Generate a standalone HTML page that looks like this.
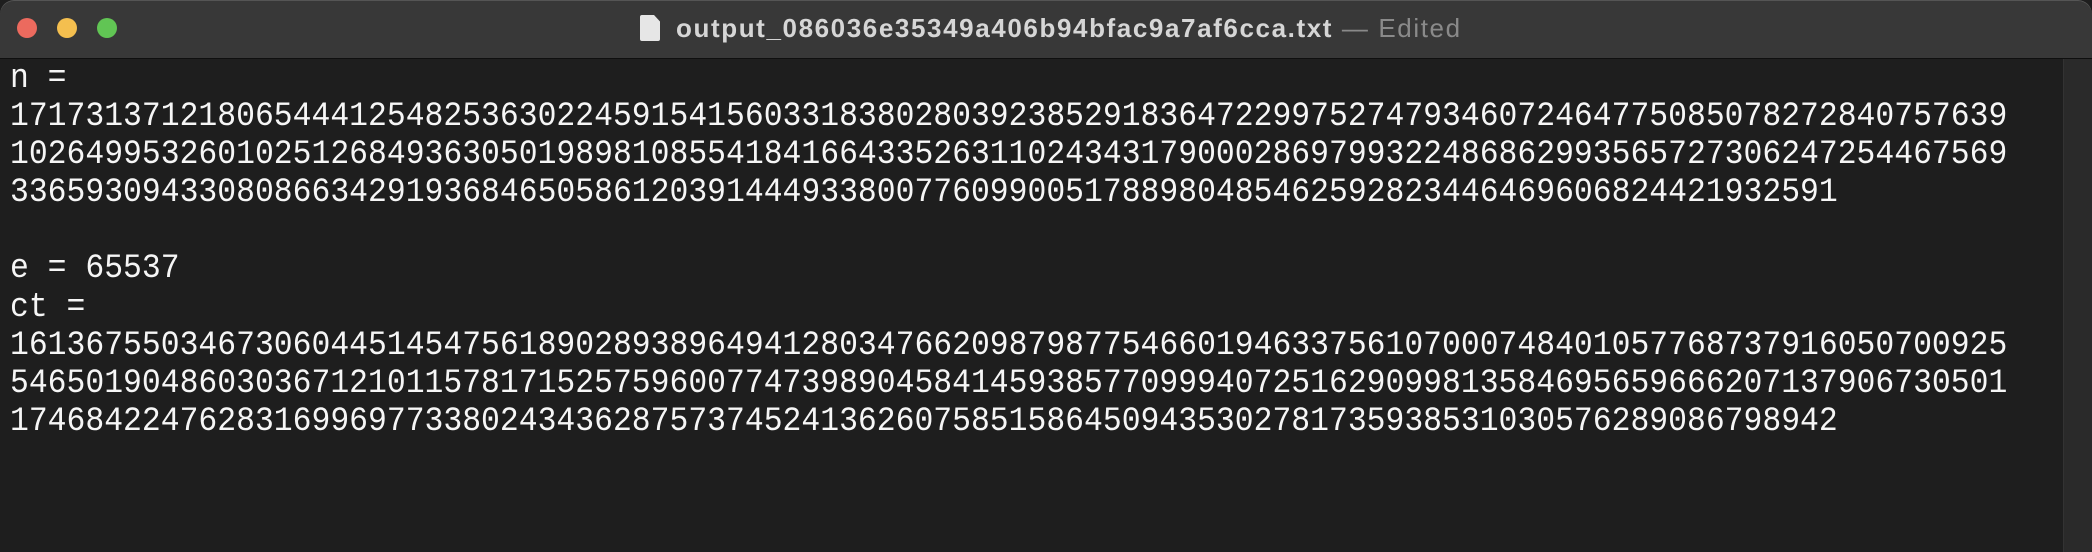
<!DOCTYPE html>
<html><head><meta charset="utf-8"><style>
html,body{margin:0;padding:0;width:2092px;height:552px;overflow:hidden;background:#1e1e1e}
.win{position:absolute;left:0;top:0;width:2092px;height:552px;background:#1e1e1e;border-radius:14px 14px 0 0;overflow:hidden}
.bar{position:absolute;left:0;top:0;width:2092px;height:58px;background:#383838;border-bottom:1px solid #0f0f0f;border-radius:14px 14px 0 0;box-shadow:inset 0 1px 0 #555}
.dot{position:absolute;top:18px;width:20px;height:20px;border-radius:50%}
.title{position:absolute;left:640px;top:13px;font:bold 26px "Liberation Sans",sans-serif;letter-spacing:1.6px;color:#d6d6d6;white-space:nowrap}
.title .ed{font-weight:normal;color:#8a8a8a}
.icon{display:inline-block;width:20px;height:26px;background:#e6e6e6;vertical-align:-4px;margin-right:16px;border-radius:2px;clip-path:polygon(0 0,70% 0,100% 25%,100% 100%,0 100%)}
.txt{position:absolute;left:10px;top:60px;font:34px/38.1px "Liberation Mono",monospace;color:#f6f6f6;white-space:pre;transform:scaleX(0.9235);transform-origin:0 0}
.sb{position:absolute;left:2063px;top:59px;width:29px;height:493px;background:#2a2a2a;border-left:1px solid #333}
</style></head><body>
<div class="win">
<div class="bar">
<div class="dot" style="left:17px;background:#ec6a5e"></div>
<div class="dot" style="left:57px;background:#f4bf4f"></div>
<div class="dot" style="left:97px;background:#61c554"></div>
<div class="title"><span class="icon"></span>output_086036e35349a406b94bfac9a7af6cca.txt <span class="ed">— Edited</span></div>
</div>
<div class="sb"></div>
<div class="txt">n = 
1717313712180654441254825363022459154156033183802803923852918364722997527479346072464775085078272840757639
1026499532601025126849363050198981085541841664335263110243431790002869799322486862993565727306247254467569
3365930943308086634291936846505861203914449338007760990051788980485462592823446469606824421932591

e = 65537
ct = 
1613675503467306044514547561890289389649412803476620987987754660194633756107000748401057768737916050700925
5465019048603036712101157817152575960077473989045841459385770999407251629099813584695659666207137906730501
1746842247628316996977338024343628757374524136260758515864509435302781735938531030576289086798942</div>
</div>
</body></html>
